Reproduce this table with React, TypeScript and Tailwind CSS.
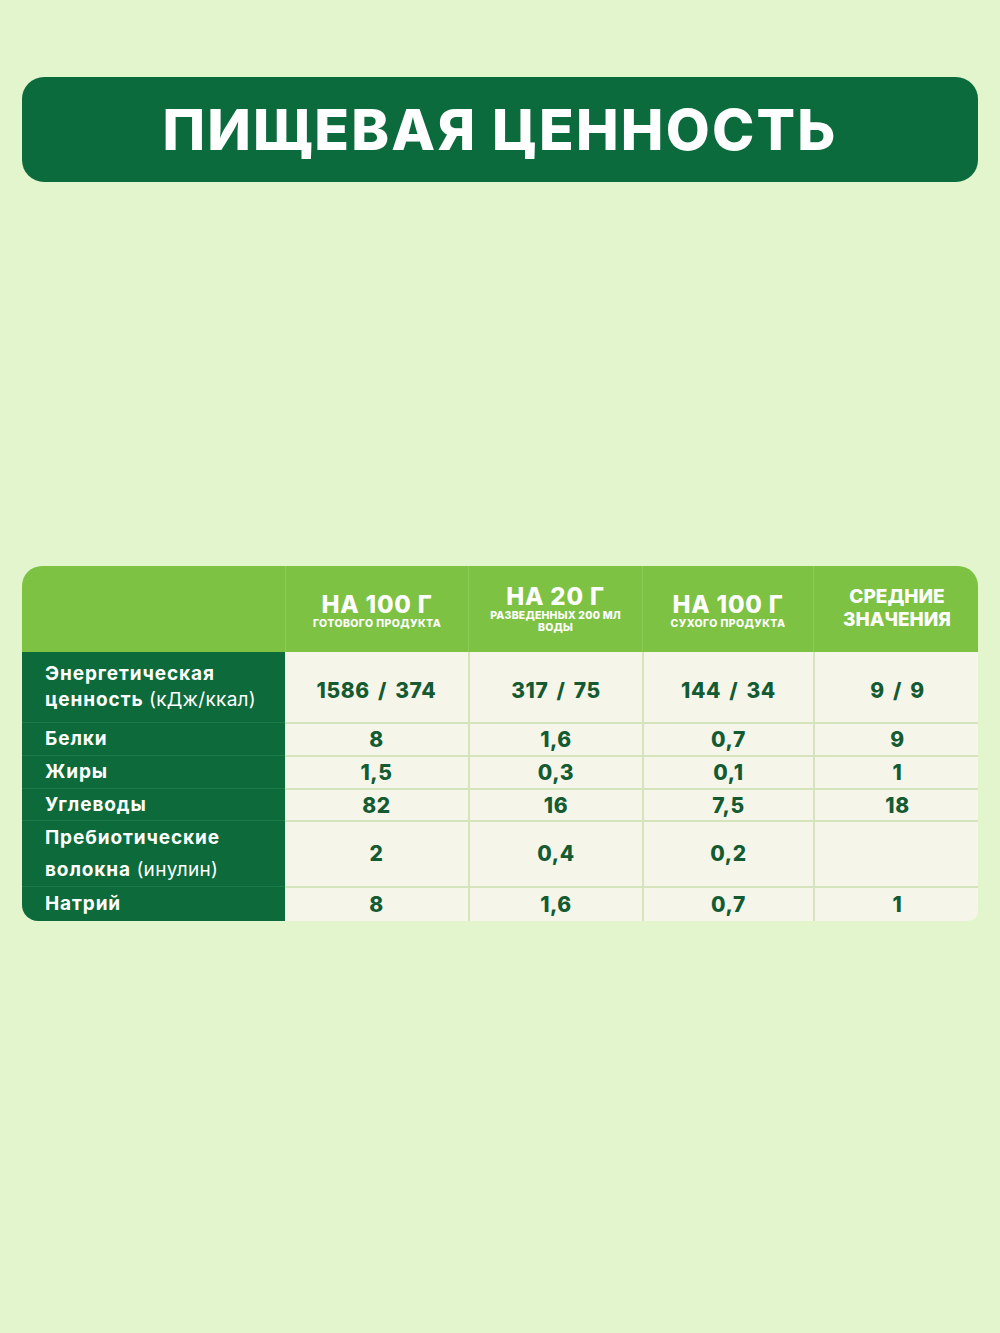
import React from "react";

const font = { fontFamily: "Inter, 'Noto Sans', sans-serif" };

type Row = { label: React.ReactNode; vals: string[]; h: string };

const rows: Row[] = [
  {
    label: (
      <>
        Энергетическая
        <br />
        ценность <span className="font-normal tracking-[0.3px]">(кДж/ккал)</span>
      </>
    ),
    vals: ["1586 / 374", "317 / 75", "144 / 34", "9 / 9"],
    h: "h-[70px]",
  },
  { label: "Белки", vals: ["8", "1,6", "0,7", "9"], h: "h-[33px]" },
  { label: "Жиры", vals: ["1,5", "0,3", "0,1", "1"], h: "h-[33px]" },
  { label: "Углеводы", vals: ["82", "16", "7,5", "18"], h: "h-[32px]" },
  {
    label: (
      <span className="leading-[32px]">
        Пребиотические
        <br />
        волокна <span className="font-normal tracking-[0.3px]">(инулин)</span>
      </span>
    ),
    vals: ["2", "0,4", "0,2", ""],
    h: "h-[66px]",
  },
  { label: "Натрий", vals: ["8", "1,6", "0,7", "1"], h: "h-[35px]" },
];

export default function App() {
  return (
    <div className="w-[1000px] h-[1333px] bg-[#e3f5cd] px-[22px] pt-[77px]" style={font}>
      <div className="h-[105px] rounded-[22px] bg-[#0c6b3d] flex items-center justify-center">
        <h1 className="text-white text-[57px] font-extrabold tracking-[2.2px] leading-none">
          ПИЩЕВАЯ ЦЕННОСТЬ
        </h1>
      </div>

      <div className="mt-[384px] rounded-t-[20px] rounded-bl-[16px] rounded-br-[10px] overflow-hidden">
        <div className="grid grid-cols-[263px_183px_174px_171px_167px] h-[86px] bg-[#7dc242] text-white">
          <div />
          <div className="flex flex-col items-center justify-center border-l border-[#8ccc55] pt-[4px]">
            <div className="text-[24px] font-extrabold leading-[26px] tracking-[0.8px]">НА 100 Г</div>
            <div className="text-[10.5px] font-extrabold leading-[12px] tracking-[0.4px]">ГОТОВОГО ПРОДУКТА</div>
          </div>
          <div className="flex flex-col items-center justify-center border-l border-[#8ccc55]">
            <div className="text-[24px] font-extrabold leading-[26px] tracking-[0.8px]">НА 20 Г</div>
            <div className="text-[10.5px] font-extrabold leading-[12px] text-center tracking-[0.2px]">
              РАЗВЕДЕННЫХ 200 МЛ
              <br />
              ВОДЫ
            </div>
          </div>
          <div className="flex flex-col items-center justify-center border-l border-[#8ccc55] pt-[4px]">
            <div className="text-[24px] font-extrabold leading-[26px] tracking-[0.8px]">НА 100 Г</div>
            <div className="text-[10.5px] font-extrabold leading-[12px] tracking-[0.4px]">СУХОГО ПРОДУКТА</div>
          </div>
          <div className="flex flex-col items-center justify-center border-l border-[#8ccc55] pb-[2px]">
            <div className="text-[19px] font-extrabold leading-[23px] text-center">
              СРЕДНИЕ
              <br />
              ЗНАЧЕНИЯ
            </div>
          </div>
        </div>

        {rows.map((r, i) => (
          <div
            key={i}
            className={`grid grid-cols-[263px_183px_174px_171px_167px] ${r.h}`}
          >
            <div
              className={`bg-[#0d6b3b] text-white text-[19px] font-bold leading-[26px] tracking-[0.9px] flex items-center pl-[23px] ${
                i > 0 ? "border-t border-[#1a7a48]" : ""
              }`}
            >
              <div>{r.label}</div>
            </div>
            {r.vals.map((v, j) => (
              <div
                key={j}
                className={`bg-[#f5f6e9] text-[#145a32] text-[21px] font-extrabold tracking-[0.6px] [word-spacing:3px] flex items-center justify-center ${
                  i === 0 ? "pt-[8px]" : ""
                } ${j > 0 ? "border-l-2 border-[#d5e4bd]" : ""} ${i > 0 ? "border-t-2 border-[#d5e4bd]" : ""}`}
              >
                {v}
              </div>
            ))}
          </div>
        ))}
      </div>
    </div>
  );
}
